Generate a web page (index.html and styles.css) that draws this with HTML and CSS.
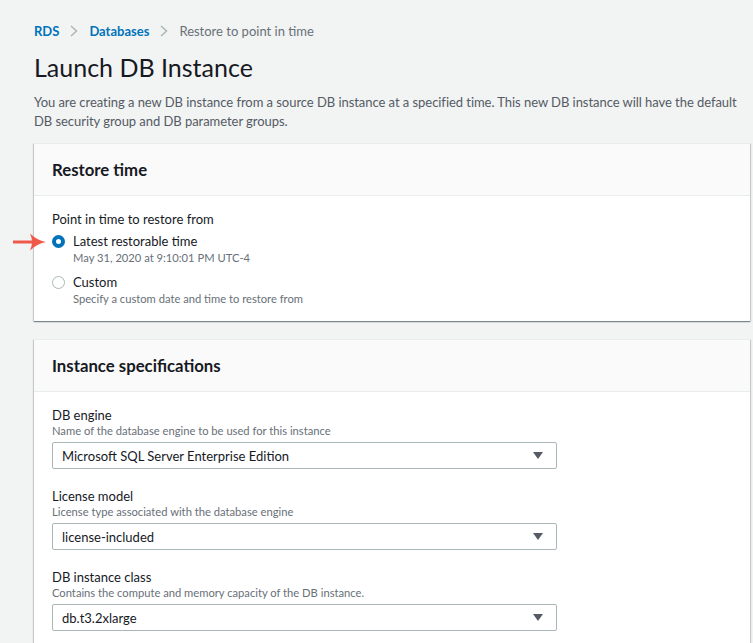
FILE: index.html
```html
<!DOCTYPE html>
<html lang="en">
<head>
<meta charset="utf-8">
<title>Launch DB Instance</title>
<link rel="stylesheet" href="styles.css">
</head>
<body>
<main class="page">
  <nav class="breadcrumb">
    <a class="crumb-link" href="#">RDS</a>
    <svg class="chev" width="8" height="12" viewBox="0 0 8 12"><path d="M1 1l5.5 5L1 11" fill="none" stroke="#aab7b8" stroke-width="1.5"/></svg>
    <a class="crumb-link" href="#">Databases</a>
    <svg class="chev" width="8" height="12" viewBox="0 0 8 12"><path d="M1 1l5.5 5L1 11" fill="none" stroke="#aab7b8" stroke-width="1.5"/></svg>
    <span class="crumb-current">Restore to point in time</span>
  </nav>
  <h1 class="title">Launch DB Instance</h1>
  <p class="intro">You are creating a new DB instance from a source DB instance at a specified time. This new DB instance will have the default DB security group and DB parameter groups.</p>

  <section class="card">
    <header class="card-head"><h2>Restore time</h2></header>
    <div class="card-body">
      <div class="field-label">Point in time to restore from</div>
      <div class="radio-row first">
        <svg class="pointer" width="34" height="20" viewBox="0 0 34 20"><path d="M0 10h24" stroke="#f0594a" stroke-width="3"/><path d="M17 1.5Q25 9 33 10Q25 11 17 18.5Q21 10 17 1.5z" fill="#f0594a"/></svg>
        <span class="radio checked"></span>
        <div class="radio-text">
          <div class="radio-label">Latest restorable time</div>
          <div class="radio-desc">May 31, 2020 at 9:10:01 PM UTC-4</div>
        </div>
      </div>
      <div class="radio-row second">
        <span class="radio"></span>
        <div class="radio-text">
          <div class="radio-label">Custom</div>
          <div class="radio-desc">Specify a custom date and time to restore from</div>
        </div>
      </div>
    </div>
  </section>

  <section class="card card-spec">
    <header class="card-head"><h2>Instance specifications</h2></header>
    <div class="card-body">
      <div class="field">
        <div class="field-label">DB engine</div>
        <div class="field-desc">Name of the database engine to be used for this instance</div>
        <div class="select"><span>Microsoft SQL Server Enterprise Edition</span><span class="caret"></span></div>
      </div>
      <div class="field">
        <div class="field-label">License model</div>
        <div class="field-desc">License type associated with the database engine</div>
        <div class="select"><span>license-included</span><span class="caret"></span></div>
      </div>
      <div class="field">
        <div class="field-label">DB instance class</div>
        <div class="field-desc">Contains the compute and memory capacity of the DB instance.</div>
        <div class="select"><span>db.t3.2xlarge</span><span class="caret"></span></div>
      </div>
    </div>
  </section>
</main>
</body>
</html>
```
FILE: styles.css
```css
* { box-sizing: border-box; }
html, body { margin: 0; padding: 0; }
body {
  background: #f2f3f3;
  font-family: "Lato", "Liberation Sans", sans-serif;
  color: #16191f;
  font-size: 13px;
  overflow: hidden;
}
.page { padding: 21px 3px 0 34px; }
.breadcrumb {
  display: flex;
  align-items: center;
  gap: 11px;
  height: 20px;
  line-height: 20px;
  font-size: 13px;
}
.crumb-link { color: #0073bb; font-weight: 700; text-decoration: none; }
.crumb-current { color: #687078; }
.chev { display: block; }
.title {
  margin: 10px 0 0;
  font-size: 25px;
  line-height: 32px;
  font-weight: 400;
  color: #16191f;
}
.intro {
  margin: 10px 0 0;
  line-height: 19px;
  color: #545b64;
  font-size: 13px;
  letter-spacing: -0.05px;
}
.card {
  margin-top: 12px;
  background: #fff;
  box-shadow: 0 1px 1px 0 rgba(0,28,36,.3), 1px 1px 1px 0 rgba(0,28,36,.15), -1px 1px 1px 0 rgba(0,28,36,.15);
  border-top: 1px solid #eaeded;
}
.card-spec { margin-top: 18px; }
.card-head {
  background: #fafafa;
  border-bottom: 1px solid #eaeded;
  padding: 16px 18px 15px;
}
.card-head h2 {
  margin: 0;
  font-size: 16.75px;
  line-height: 20px;
  font-weight: 700;
  color: #16191f;
}
.card-body { padding: 15px 18px 15px; }
.card-body-restore { padding-bottom: 16px; }
.field-label { line-height: 16px; font-size: 13px; color: #16191f; }
.radio-row { position: relative; display: flex; gap: 8px; margin-top: 6px; }
.radio-row.second { margin-top: 9px; }
.pointer { position: absolute; left: -39px; top: -1.5px; }
.radio {
  flex: none;
  width: 13px;
  height: 13px;
  margin: 2px 0 0 0;
  border-radius: 50%;
  border: 1px solid #aab7b8;
  background: #fff;
}
.radio.checked { border: 4px solid #0073bb; }
.radio-label { line-height: 17px; font-size: 13px; }
.radio-desc { line-height: 15px; font-size: 11.2px; color: #687078; }
.field { margin-bottom: 19px; }
.field-desc { line-height: 16px; font-size: 11.2px; color: #687078; }
.select {
  margin-top: 3px;
  width: 505px;
  height: 27px;
  border: 1px solid #aab7b8;
  border-radius: 2px;
  display: flex;
  align-items: center;
  justify-content: space-between;
  padding: 0 13px 0 9px;
  font-size: 13px;
  color: #16191f;
}
.caret {
  width: 0;
  height: 0;
  border-left: 5px solid transparent;
  border-right: 5px solid transparent;
  border-top: 7px solid #545b64;
}
```
